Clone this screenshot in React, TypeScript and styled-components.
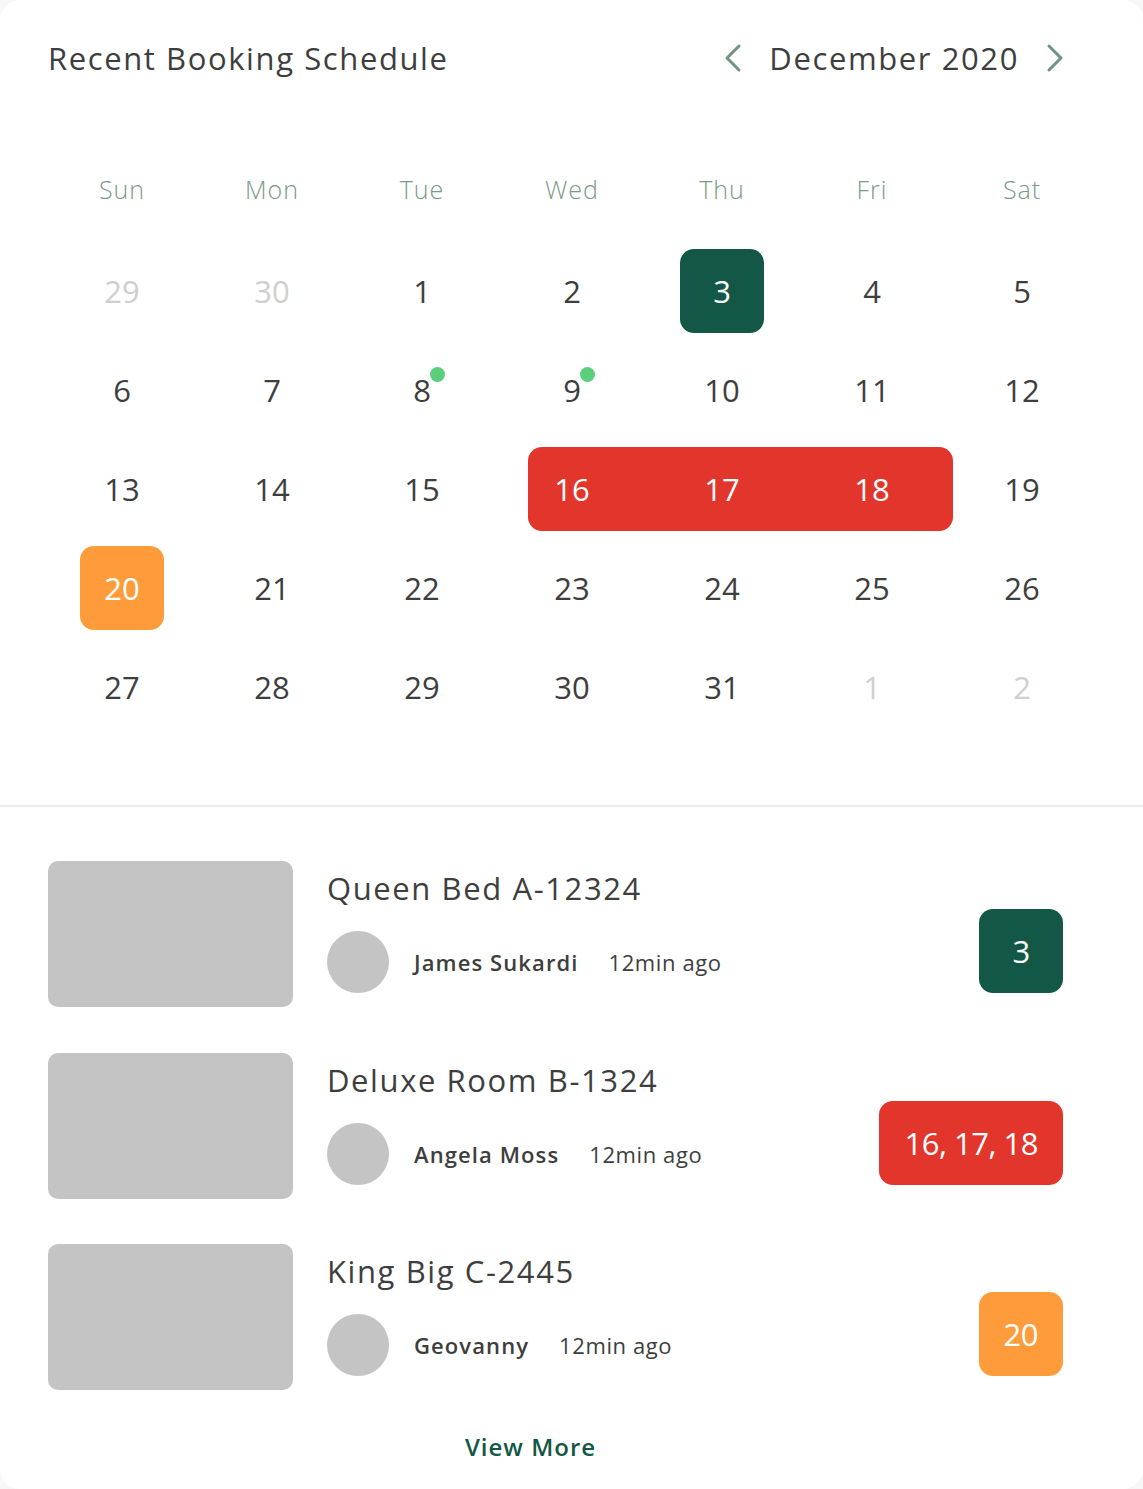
import styled, { createGlobalStyle } from "styled-components"

const GlobalStyle = createGlobalStyle`
    html, body {
        margin: 0;
        padding: 0;
        background: #f7f7f7;
    }
    * {
        box-sizing: border-box;
    }
`

const Card = styled.div`
    width: 1143px;
    min-height: 1489px;
    background: #ffffff;
    border-radius: 20px;
    font-family: "Open Sans", "Noto Sans", sans-serif;
    color: #3e3e3e;
    overflow: hidden;
`

const CalendarSection = styled.section`
    padding: 40px 46px 69px 47px;
    border-bottom: 2px solid #ececec;
`

const Header = styled.div`
    display: flex;
    justify-content: space-between;
    align-items: center;
    height: 36px;
    padding-left: 1px;
`

const Title = styled.h2`
    margin: 0;
    font-size: 31px;
    font-weight: 500;
    line-height: 36px;
    letter-spacing: 1.6px;
`

const MonthNav = styled.div`
    display: flex;
    align-items: center;
    gap: 26px;
    padding-right: 32px;
`

const NavButton = styled.button`
    border: none;
    background: none;
    padding: 0;
    display: flex;
    cursor: pointer;
`

const MonthLabel = styled.span`
    font-size: 31px;
    font-weight: 400;
    line-height: 36px;
    letter-spacing: 1.6px;
`

const Grid = styled.div`
    display: grid;
    grid-template-columns: repeat(7, 150px);
    grid-template-rows: 105px repeat(5, 99px);
    margin-top: 60px;
`

const DayName = styled.div`
    display: flex;
    align-items: center;
    justify-content: center;
    font-size: 25px;
    font-weight: 300;
    letter-spacing: 1px;
    color: #7a9a88;
`

const DayCell = styled.div<{ $muted?: boolean }>`
    display: flex;
    align-items: center;
    justify-content: center;
    font-size: 31px;
    color: ${p => (p.$muted ? "#cfcfcf" : "#3e3e3e")};
`

const DayBox = styled.div<{ $bg?: string }>`
    position: relative;
    width: 84px;
    height: 84px;
    border-radius: 14px;
    display: flex;
    align-items: center;
    justify-content: center;
    background: ${p => p.$bg || "transparent"};
    color: ${p => (p.$bg ? "#ffffff" : "inherit")};
`

const Dot = styled.span`
    position: absolute;
    top: 19px;
    left: 50px;
    width: 15px;
    height: 15px;
    border-radius: 50%;
    background: #5ccf7c;
`

const RangeCell = styled.div`
    grid-column: span 3;
    display: grid;
    grid-template-columns: repeat(3, 150px);
    align-items: center;
    justify-items: center;
    padding: 8px 0 7px;
`

const RangeBar = styled.div`
    grid-column: 1 / -1;
    grid-row: 1;
    justify-self: stretch;
    align-self: stretch;
    margin: 0 -6px 0 31px;
    background: #e2352b;
    border-radius: 14px;
`

const RangeDay = styled.span<{ $col: number }>`
    grid-row: 1;
    grid-column: ${p => p.$col};
    font-size: 31px;
    color: #ffffff;
`

const ListSection = styled.section`
    padding: 54px 80px 23px 48px;
    display: flex;
    flex-direction: column;
`

const BookingList = styled.div`
    display: flex;
    flex-direction: column;
    gap: 45.5px;
`

const BookingRow = styled.div`
    display: flex;
    align-items: flex-start;
`

const Thumb = styled.div`
    width: 245px;
    height: 146px;
    border-radius: 10px;
    background: #c4c4c4;
    flex-shrink: 0;
`

const Info = styled.div`
    flex: 1;
    padding: 9px 0 0 34px;
`

const RoomName = styled.div`
    font-size: 31px;
    font-weight: 400;
    line-height: 36px;
    letter-spacing: 1.6px;
`

const Meta = styled.div`
    display: flex;
    align-items: center;
    margin-top: 25px;
`

const Avatar = styled.div`
    width: 62px;
    height: 62px;
    border-radius: 50%;
    background: #c4c4c4;
    margin-right: 25px;
`

const Guest = styled.span`
    font-size: 22px;
    font-weight: 600;
    letter-spacing: 1.1px;
    margin-right: 30px;
`

const Time = styled.span`
    font-size: 22px;
    font-weight: 400;
    letter-spacing: 0.6px;
`

const Badge = styled.div<{ $bg: string }>`
    margin-top: 48px;
    min-width: 84px;
    height: 84px;
    padding: 0 25px;
    border-radius: 14px;
    background: ${p => p.$bg};
    color: #ffffff;
    font-size: 31px;
    letter-spacing: -0.5px;
    display: flex;
    align-items: center;
    justify-content: center;
`

const ViewMore = styled.a`
    align-self: center;
    margin: 39px 0 0 -50px;
    font-size: 24px;
    font-weight: 600;
    line-height: 36px;
    letter-spacing: 1px;
    color: #135846;
    cursor: pointer;
`

const GREEN = "#135846"
const RED = "#e2352b"
const ORANGE = "#fe9c3c"

function Chevron({ dir }: { dir: "left" | "right" }) {
    return (
        <svg width="20" height="30" viewBox="0 0 20 30" fill="none">
            <path
                d={dir === "left" ? "M16 3 L4 15 L16 27" : "M4 3 L16 15 L4 27"}
                stroke="#6f9482"
                strokeWidth="3"
                strokeLinecap="round"
                strokeLinejoin="round"
            />
        </svg>
    )
}

const dayNames = ["Sun", "Mon", "Tue", "Wed", "Thu", "Fri", "Sat"]

const bookings = [
    { room: "Queen Bed A-12324", guest: "James Sukardi", days: "3", color: GREEN },
    { room: "Deluxe Room B-1324", guest: "Angela Moss", days: "16, 17, 18", color: RED },
    { room: "King Big C-2445", guest: "Geovanny", days: "20", color: ORANGE },
]

function Day({ n, muted, bg, dot }: { n: number; muted?: boolean; bg?: string; dot?: boolean }) {
    return (
        <DayCell $muted={muted}>
            <DayBox $bg={bg}>
                {n}
                {dot && <Dot />}
            </DayBox>
        </DayCell>
    )
}

export default function App() {
    return (
        <>
            <GlobalStyle />
            <Card>
                <CalendarSection>
                    <Header>
                        <Title>Recent Booking Schedule</Title>
                        <MonthNav>
                            <NavButton><Chevron dir="left" /></NavButton>
                            <MonthLabel>December 2020</MonthLabel>
                            <NavButton><Chevron dir="right" /></NavButton>
                        </MonthNav>
                    </Header>

                    <Grid>
                        {dayNames.map(d => <DayName key={d}>{d}</DayName>)}

                        <Day n={29} muted />
                        <Day n={30} muted />
                        <Day n={1} />
                        <Day n={2} />
                        <Day n={3} bg={GREEN} />
                        <Day n={4} />
                        <Day n={5} />

                        <Day n={6} />
                        <Day n={7} />
                        <Day n={8} dot />
                        <Day n={9} dot />
                        <Day n={10} />
                        <Day n={11} />
                        <Day n={12} />

                        <Day n={13} />
                        <Day n={14} />
                        <Day n={15} />
                        <RangeCell>
                            <RangeBar />
                            <RangeDay $col={1}>16</RangeDay>
                            <RangeDay $col={2}>17</RangeDay>
                            <RangeDay $col={3}>18</RangeDay>
                        </RangeCell>
                        <Day n={19} />

                        <Day n={20} bg={ORANGE} />
                        {[21, 22, 23, 24, 25, 26].map(n => <Day key={n} n={n} />)}

                        {[27, 28, 29, 30, 31].map(n => <Day key={n} n={n} />)}
                        <Day n={1} muted />
                        <Day n={2} muted />
                    </Grid>
                </CalendarSection>

                <ListSection>
                    <BookingList>
                        {bookings.map(b => (
                            <BookingRow key={b.room}>
                                <Thumb />
                                <Info>
                                    <RoomName>{b.room}</RoomName>
                                    <Meta>
                                        <Avatar />
                                        <Guest>{b.guest}</Guest>
                                        <Time>12min ago</Time>
                                    </Meta>
                                </Info>
                                <Badge $bg={b.color}>{b.days}</Badge>
                            </BookingRow>
                        ))}
                    </BookingList>
                    <ViewMore>View More</ViewMore>
                </ListSection>
            </Card>
        </>
    )
}
